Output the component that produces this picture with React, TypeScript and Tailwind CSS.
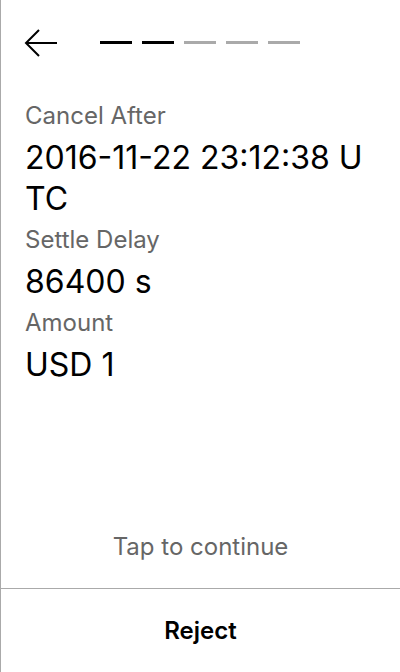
const steps = [true, true, false, false, false];

const fields = [
  { label: "Cancel After", value: "2016-11-22 23:12:38 UTC" },
  { label: "Settle Delay", value: "86400 s" },
  { label: "Amount", value: "USD 1" },
];

export default function App() {
  return (
    <div className="flex h-[672px] w-[400px] flex-col border-l border-[#aaaaaa] bg-white font-['Inter',sans-serif] text-black">
      <div className="flex h-[86px] items-start pt-[29px] pl-[23px]">
        <svg width="36" height="28" viewBox="0 0 36 28" fill="none" stroke="black" strokeWidth="2">
          <path d="M2 14 H33" />
          <path d="M15 1 L2 14 L15 27" />
        </svg>
        <div className="mt-[12px] ml-[40px] flex gap-[10px]">
          {steps.map((done, i) => (
            <div key={i} className={done ? "h-[3px] w-[32px] bg-black" : "h-[3px] w-[32px] bg-[#aaaaaa]"} />
          ))}
        </div>
      </div>

      <div className="flex flex-col px-6 pt-[9px]">
        {fields.map((f) => (
          <div key={f.label} className="flex flex-col">
            <span className="text-[24px] leading-[42px] text-[#666666]">{f.label}</span>
            <span className="break-all text-[32px] leading-[41px]">{f.value}</span>
          </div>
        ))}
      </div>

      <div className="flex-1" />

      <div className="pb-[27px] text-center text-[24px] leading-[28px] text-[#666666]">Tap to continue</div>
      <div className="flex h-[84px] items-center justify-center border-t border-[#aaaaaa]">
        <span className="text-[24px] font-semibold">Reject</span>
      </div>
    </div>
  );
}
